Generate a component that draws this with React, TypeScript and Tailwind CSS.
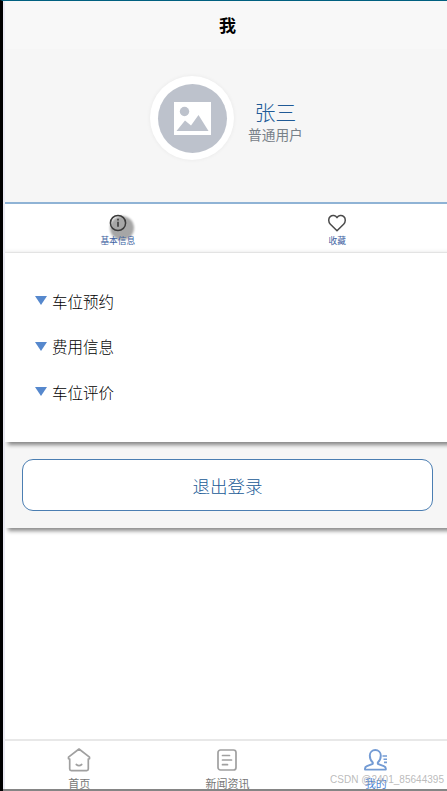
import React from "react";

const menuItems = ["车位预约", "费用信息", "车位评价"];

const InfoIcon = () => (
  <svg width="18" height="18" viewBox="0 0 18 18" fill="none" stroke="#3a3a3a">
    <circle cx="9" cy="9" r="7.6" strokeWidth="1.5" />
    <path d="M9 4.800v1.700M9 7.800v5" strokeWidth="1.600" />
  </svg>
);

const HeartIcon = () => (
  <svg width="20" height="18" viewBox="0 0 20 18" fill="none" stroke="#4a4a4a" strokeWidth="1.5" strokeLinejoin="round">
    <path d="M10 16.800 3.400 10.300C1.200 7.800 1.200 4.400 3.200 2.600 5.300.800 8.500 1.300 10 3.700 11.500 1.300 14.700.800 16.800 2.600c2 1.800 2 5.200-.2 7.700Z" />
  </svg>
);

const HomeIcon = () => (
  <svg width="24" height="24" viewBox="0 0 24 24" fill="none" stroke="#a0a0a0" strokeWidth="1.7" strokeLinecap="round" strokeLinejoin="round">
    <path d="M1.500 9.200 12 1l10.500 8.200v1.500l-1.200.4v10c0 1-.6 1.600-1.500 1.600H4.200c-.9 0-1.500-.6-1.500-1.600v-10l-1.200-.4Z" />
    <path d="M9.300 16.500c1.500 1.200 3.900 1.200 5.400 0" />
  </svg>
);

const NewsIcon = () => (
  <svg width="20" height="22" viewBox="0 0 20 22" fill="none" stroke="#a0a0a0" strokeWidth="1.7" strokeLinecap="round">
    <rect x="1" y="1" width="18" height="20" rx="2.500" />
    <path d="M5.500 6.500h7M5.500 11h9M5.500 15.700h5" />
  </svg>
);

const UserIcon = () => (
  <svg width="24" height="22" viewBox="0 0 24 22" fill="none" stroke="#739bd4" strokeWidth="1.900" strokeLinejoin="round">
    <path d="M8.800 13.500C6.600 11.700 5.800 9.500 5.800 6.600 5.800 3.300 8.200 1 11.300 1s5.500 2.300 5.500 5.600c0 2.900-.8 5.100-3 6.900v1.300l6 2.300c1.300.5 2 1.200 2 2.500v1H1v-1c0-1.300.6-2 1.900-2.500l5.900-2.300Z" />
    <path d="M18.500 7h4.500M19.500 10.200h3.500M20 13.400h3" strokeWidth="1.600" />
  </svg>
);

const Avatar = () => (
  <div className="flex h-[84px] w-[84px] items-center justify-center rounded-full bg-white shadow-[0_0_4px_rgba(0,0,0,0.06)]">
    <div className="flex h-[69px] w-[69px] items-center justify-center rounded-full bg-[#bdc2cc]">
      <svg width="37" height="33" viewBox="0 0 37 33">
        <rect width="37" height="33" fill="#fff" />
        <circle cx="10.500" cy="9.500" r="4.700" fill="#bdc2cc" />
        <path d="M2.500 29 11 18.500l6 5 7.500-10.500L34.500 29Z" fill="#bdc2cc" />
      </svg>
    </div>
  </div>
);

const TabBar = () => (
  <nav className="mt-auto grid h-[52px] shrink-0 grid-cols-3 border-t-2 border-[#e8e8e8] bg-white text-[11px] leading-[14px] text-[#777777]">
    <div className="flex flex-col items-center pt-[7px]">
      <HomeIcon />
      <span className="mt-[5px]">首页</span>
    </div>
    <div className="flex flex-col items-center pt-[8px]">
      <NewsIcon />
      <span className="mt-[6px]">新闻资讯</span>
    </div>
    <div className="flex flex-col items-center pt-[8px] text-[#4b83d5]">
      <UserIcon />
      <span className="mt-[6px]">我的</span>
    </div>
  </nav>
);

export default function App() {
  return (
    <div className="relative h-[791px] w-[447px] overflow-hidden border-l-[3px] border-t border-l-black border-t-[#006080] bg-white font-['Liberation_Sans','Noto_Sans_CJK_SC',sans-serif]">
      <div className="flex h-[790px] w-[447px] flex-col border-l-2 border-[#eaeaf3]">
        <header className="h-12 shrink-0 bg-[#f8f8f8] pt-[14px] text-center text-[17px] font-bold leading-6 text-black">
          我
        </header>

        {/* Profile */}
        <section className="flex h-[155px] shrink-0 items-start border-b-2 border-[#8fb3d5] bg-[#f6f6f6] pl-[145px] pt-[27px]">
          <Avatar />
          <div className="ml-[14px] mt-[25px] text-center">
            <div className="text-[21px] font-light leading-6 text-[#205a96]">张三</div>
            <div className="mt-px text-[13.7px] leading-5 text-[#788088]">普通用户</div>
          </div>
        </section>

        <section className="grid h-[49px] shrink-0 grid-cols-2 border-b border-[#e8e8e8] px-[3px] text-[8.7px] leading-3 text-[#3d5f9f] shadow-[inset_0_-3px_4px_-3px_rgba(0,0,0,0.1)]">
          <div className="flex flex-col items-center pt-[10px]">
            <div className="relative">
              <span className="absolute left-[1px] top-[2px] h-6 w-6 rounded-full bg-black/35 blur-[1px]" />
              <div className="relative">
                <InfoIcon />
              </div>
            </div>
            <span className="relative mt-[3px]">基本信息</span>
          </div>
          <div className="flex flex-col items-center pt-[10px]">
            <HeartIcon />
            <span className="mt-[3px]">收藏</span>
          </div>
        </section>

        {/* Menu list */}
        <section className="relative z-10 h-[189px] shrink-0 bg-white pl-[30px] pt-[27px] shadow-[3px_3px_4px_rgba(0,0,0,0.45)]">
          {menuItems.map((item) => (
            <div key={item} className="flex h-[45.5px] items-center">
              <svg width="12" height="9" viewBox="0 0 12 9" className="-mt-1">
                <path d="M0 0h12L6 9Z" fill="#5688cd" />
              </svg>
              <span className="ml-[5px] text-[15.5px] font-light leading-6 text-black">{item}</span>
            </div>
          ))}
        </section>

        <section className="h-[86px] shrink-0 bg-[#f6f6f6] pl-[17px] pt-[17px] shadow-[3px_3px_4px_rgba(0,0,0,0.45)]">
          <button className="h-[52px] w-[411px] rounded-[11px] border border-[#4b7eb2] bg-white pt-[5px] text-[17.5px] font-light text-[#205a96]">
            退出登录
          </button>
        </section>

        <TabBar />
      </div>

      <div className="absolute bottom-0 left-0 h-[2px] w-full bg-[#858585]" />
      <span className="absolute bottom-[5px] right-[3px] text-[10px] leading-[13px] tracking-[0.02px] text-[#aaaaaa]/80">
        CSDN @2401_85644395
      </span>
    </div>
  );
}
